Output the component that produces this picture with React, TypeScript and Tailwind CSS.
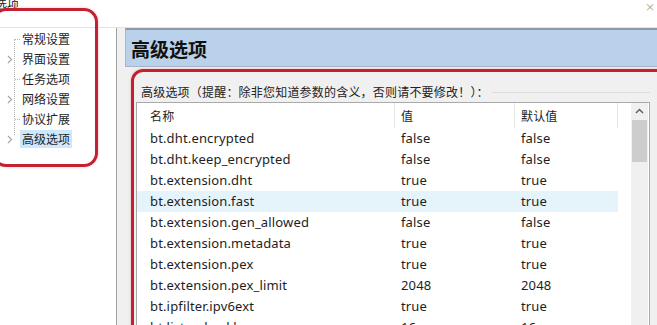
import React from 'react';

const CJK = '"Noto Sans CJK SC", "Noto Sans", sans-serif';
const LATIN = '"Noto Sans", "Noto Sans CJK SC", sans-serif';

const treeItems = [
  { label: '常规设置', expandable: false },
  { label: '界面设置', expandable: true },
  { label: '任务选项', expandable: false },
  { label: '网络设置', expandable: true },
  { label: '协议扩展', expandable: false },
  { label: '高级选项', expandable: true, selected: true },
];

const rows = [
  ['bt.dht.encrypted', 'false', 'false'],
  ['bt.dht.keep_encrypted', 'false', 'false'],
  ['bt.extension.dht', 'true', 'true'],
  ['bt.extension.fast', 'true', 'true'],
  ['bt.extension.gen_allowed', 'false', 'false'],
  ['bt.extension.metadata', 'true', 'true'],
  ['bt.extension.pex', 'true', 'true'],
  ['bt.extension.pex_limit', '2048', '2048'],
  ['bt.ipfilter.ipv6ext', 'true', 'true'],
  ['bt.listen.backlog', '16', '16'],
];

const Chevron: React.FC = () => (
  <svg width="6" height="9" viewBox="0 0 6 9" className="shrink-0">
    <path d="M1 1 L4.5 4.5 L1 8" fill="none" stroke="#a6a6a6" strokeWidth="1.2" />
  </svg>
);

const App: React.FC = () => {
  return (
    <div className="relative w-[657px] h-[325px] overflow-hidden bg-[#f0f0f0] text-[#1e1e1e]" style={{ fontFamily: CJK }}>
      {/* title bar */}
      <div className="h-[28px] bg-white border-b border-[#e3e3e3] flex items-start justify-between">
        <span className="text-[12px] leading-[14px] -mt-[3px] -ml-[5px] text-[#222]">选项</span>
        <span className="text-[10px] leading-[12px] mt-[1px] mr-[2px] text-[#9a9a9a]">×</span>
      </div>

      <div className="flex h-[297px]">
        {/* left tree */}
        <div className="w-[117px] shrink-0 bg-white border-r border-[#a0a0a0] pt-[1px]">
          <div className="relative pl-[5px]">
            <div className="absolute left-[14px] top-[10px] h-[96px] border-l border-dotted border-[#b5b5b5]" />
            {treeItems.map((item) => (
              <div key={item.label} className="relative flex items-center h-[20px]">
                <div className="w-[15px] flex items-center justify-start pl-[2px]">
                  {item.expandable ? (
                    <span className="bg-white relative z-10 py-[2px]"><Chevron /></span>
                  ) : (
                    <span className="ml-[8px] w-[6px] border-t border-dotted border-[#b5b5b5]" />
                  )}
                </div>
                <span
                  className={`text-[12px] leading-[18px] px-[2px] ${item.selected ? 'bg-[#cce8ff]' : ''}`}
                >
                  {item.label}
                </span>
              </div>
            ))}
          </div>
        </div>

        {/* right pane */}
        <div className="flex-1 min-w-0 pl-[8px] flex flex-col">
          <div className="h-[39px] shrink-0 bg-[#b9d1ea] border-t-2 border-[#8f98a3] border-l border-l-[#a9b8c8] border-b border-b-[#a6b6c7] flex items-center pl-[5px]">
            <span className="text-[19px] font-bold leading-none text-[#111]">高级选项</span>
          </div>

          <div className="flex-1 min-h-0 pl-[11px] pr-[7px] pt-[18px] flex flex-col">
            <div className="flex items-center h-[14px] shrink-0">
              <span className="text-[12px] tracking-[0.2px] leading-none pl-[5px] pr-[3px] whitespace-nowrap text-[#222]">
                高级选项（提醒：除非您知道参数的含义，否则请不要修改！）：
              </span>
              <div className="flex-1 border-t border-[#dcdcdc]" />
            </div>

            <div className="mt-[3px] flex-1 min-h-0 bg-white border border-[#a9a9a9] border-b-0 flex overflow-hidden">
              <div className="flex-1 flex flex-col text-[13px] tracking-[0.15px]" style={{ fontFamily: LATIN }}>
                <div className="flex h-[25px] shrink-0 items-center text-[12px]">
                  <div className="w-[258px] pl-[13px] h-full flex items-center border-r border-[#e5e5e5]" style={{ fontFamily: CJK }}>名称</div>
                  <div className="w-[120px] pl-[6px] h-full flex items-center border-r border-[#e5e5e5]" style={{ fontFamily: CJK }}>值</div>
                  <div className="w-[103px] pl-[6px] h-full flex items-center border-r border-[#e5e5e5]" style={{ fontFamily: CJK }}>默认值</div>
                </div>
                {rows.map(([name, val, def], i) => (
                  <div key={name} className={`flex h-[21px] shrink-0 items-center w-[481px] ${i === 3 ? 'bg-[#e5f3fb]' : ''}`}>
                    <div className="w-[258px] pl-[13px]">{name}</div>
                    <div className="w-[120px] pl-[6px]">{val}</div>
                    <div className="w-[103px] pl-[6px]">{def}</div>
                  </div>
                ))}
              </div>
              {/* scrollbar */}
              <div className="w-[17px] mr-[1px] bg-[#f0f0f0] flex flex-col items-center">
                <svg width="17" height="17" viewBox="0 0 17 17">
                  <path d="M5 10 L8.5 6.5 L12 10" fill="none" stroke="#606060" strokeWidth="1.5" />
                </svg>
                <div className="w-[15px] h-[42px] bg-[#cdcdcd]" />
              </div>
            </div>
          </div>
        </div>
      </div>

      {/* red annotation marks */}
      <div className="absolute left-[-8px] top-[8px] w-[106px] h-[159px] rounded-[14px] border-[3px] border-[#c4202f] shadow-[0_0_3px_rgba(220,80,90,0.35)]" />
      <div className="absolute left-[131px] top-[69px] w-[560px] h-[300px] rounded-[12px] border-[3px] border-[#c4202f] shadow-[0_0_3px_rgba(220,80,90,0.35)]" />
    </div>
  );
};

export default App;
